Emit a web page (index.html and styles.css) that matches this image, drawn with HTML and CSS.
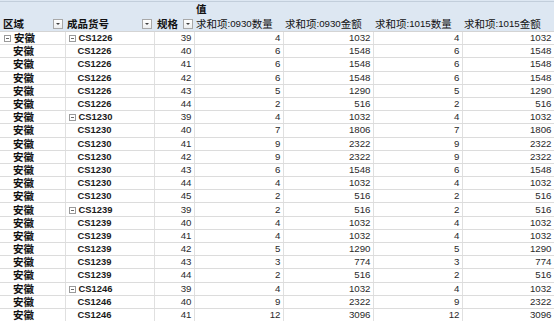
FILE: index.html
```html
<!DOCTYPE html>
<html lang="zh">
<head>
<meta charset="utf-8">
<title>数据透视表</title>
<link rel="stylesheet" href="styles.css">
</head>
<body>
<div class="band"></div>
<table class="pivot">
  <colgroup>
    <col class="c1"><col class="c2"><col class="c3"><col class="c4"><col class="c5"><col class="c6"><col class="c7">
  </colgroup>
  <thead>
    <tr class="h1">
      <th colspan="3"></th>
      <th colspan="4" class="val"><span class="zh b">值</span></th>
    </tr>
    <tr class="h2">
      <th class="lab l1"><div class="hcell"><span class="zh b">区域</span><span class="dd"></span></div></th>
      <th class="lab l2"><div class="hcell"><span class="zh b">成品货号</span><span class="dd"></span></div></th>
      <th class="lab l3"><div class="hcell"><span class="zh b">规格</span><span class="dd"></span></div></th>
      <th class="sum"><span class="zh">求和项</span>:0930<span class="zh">数量</span></th>
      <th class="sum"><span class="zh">求和项</span>:0930<span class="zh">金额</span></th>
      <th class="sum"><span class="zh">求和项</span>:1015<span class="zh">数量</span></th>
      <th class="sum"><span class="zh">求和项</span>:1015<span class="zh">金额</span></th>
    </tr>
  </thead>
  <tbody>
    <tr><td class="r1"><span class="tog"></span><span class="zh b">安徽</span></td><td class="r2"><span class="tog"></span><b>CS1226</b></td><td class="n">39</td><td class="n">4</td><td class="n">1032</td><td class="n">4</td><td class="n">1032</td></tr>
    <tr><td class="r1"><span class="slot"></span><span class="zh b">安徽</span></td><td class="r2"><span class="slot"></span><b>CS1226</b></td><td class="n">40</td><td class="n">6</td><td class="n">1548</td><td class="n">6</td><td class="n">1548</td></tr>
    <tr><td class="r1"><span class="slot"></span><span class="zh b">安徽</span></td><td class="r2"><span class="slot"></span><b>CS1226</b></td><td class="n">41</td><td class="n">6</td><td class="n">1548</td><td class="n">6</td><td class="n">1548</td></tr>
    <tr><td class="r1"><span class="slot"></span><span class="zh b">安徽</span></td><td class="r2"><span class="slot"></span><b>CS1226</b></td><td class="n">42</td><td class="n">6</td><td class="n">1548</td><td class="n">6</td><td class="n">1548</td></tr>
    <tr><td class="r1"><span class="slot"></span><span class="zh b">安徽</span></td><td class="r2"><span class="slot"></span><b>CS1226</b></td><td class="n">43</td><td class="n">5</td><td class="n">1290</td><td class="n">5</td><td class="n">1290</td></tr>
    <tr><td class="r1"><span class="slot"></span><span class="zh b">安徽</span></td><td class="r2"><span class="slot"></span><b>CS1226</b></td><td class="n">44</td><td class="n">2</td><td class="n">516</td><td class="n">2</td><td class="n">516</td></tr>

    <tr><td class="r1"><span class="slot"></span><span class="zh b">安徽</span></td><td class="r2"><span class="tog"></span><b>CS1230</b></td><td class="n">39</td><td class="n">4</td><td class="n">1032</td><td class="n">4</td><td class="n">1032</td></tr>
    <tr><td class="r1"><span class="slot"></span><span class="zh b">安徽</span></td><td class="r2"><span class="slot"></span><b>CS1230</b></td><td class="n">40</td><td class="n">7</td><td class="n">1806</td><td class="n">7</td><td class="n">1806</td></tr>
    <tr><td class="r1"><span class="slot"></span><span class="zh b">安徽</span></td><td class="r2"><span class="slot"></span><b>CS1230</b></td><td class="n">41</td><td class="n">9</td><td class="n">2322</td><td class="n">9</td><td class="n">2322</td></tr>
    <tr><td class="r1"><span class="slot"></span><span class="zh b">安徽</span></td><td class="r2"><span class="slot"></span><b>CS1230</b></td><td class="n">42</td><td class="n">9</td><td class="n">2322</td><td class="n">9</td><td class="n">2322</td></tr>
    <tr><td class="r1"><span class="slot"></span><span class="zh b">安徽</span></td><td class="r2"><span class="slot"></span><b>CS1230</b></td><td class="n">43</td><td class="n">6</td><td class="n">1548</td><td class="n">6</td><td class="n">1548</td></tr>
    <tr><td class="r1"><span class="slot"></span><span class="zh b">安徽</span></td><td class="r2"><span class="slot"></span><b>CS1230</b></td><td class="n">44</td><td class="n">4</td><td class="n">1032</td><td class="n">4</td><td class="n">1032</td></tr>
    <tr><td class="r1"><span class="slot"></span><span class="zh b">安徽</span></td><td class="r2"><span class="slot"></span><b>CS1230</b></td><td class="n">45</td><td class="n">2</td><td class="n">516</td><td class="n">2</td><td class="n">516</td></tr>

    <tr><td class="r1"><span class="slot"></span><span class="zh b">安徽</span></td><td class="r2"><span class="tog"></span><b>CS1239</b></td><td class="n">39</td><td class="n">2</td><td class="n">516</td><td class="n">2</td><td class="n">516</td></tr>
    <tr><td class="r1"><span class="slot"></span><span class="zh b">安徽</span></td><td class="r2"><span class="slot"></span><b>CS1239</b></td><td class="n">40</td><td class="n">4</td><td class="n">1032</td><td class="n">4</td><td class="n">1032</td></tr>
    <tr><td class="r1"><span class="slot"></span><span class="zh b">安徽</span></td><td class="r2"><span class="slot"></span><b>CS1239</b></td><td class="n">41</td><td class="n">4</td><td class="n">1032</td><td class="n">4</td><td class="n">1032</td></tr>
    <tr><td class="r1"><span class="slot"></span><span class="zh b">安徽</span></td><td class="r2"><span class="slot"></span><b>CS1239</b></td><td class="n">42</td><td class="n">5</td><td class="n">1290</td><td class="n">5</td><td class="n">1290</td></tr>
    <tr><td class="r1"><span class="slot"></span><span class="zh b">安徽</span></td><td class="r2"><span class="slot"></span><b>CS1239</b></td><td class="n">43</td><td class="n">3</td><td class="n">774</td><td class="n">3</td><td class="n">774</td></tr>
    <tr><td class="r1"><span class="slot"></span><span class="zh b">安徽</span></td><td class="r2"><span class="slot"></span><b>CS1239</b></td><td class="n">44</td><td class="n">2</td><td class="n">516</td><td class="n">2</td><td class="n">516</td></tr>

    <tr><td class="r1"><span class="slot"></span><span class="zh b">安徽</span></td><td class="r2"><span class="tog"></span><b>CS1246</b></td><td class="n">39</td><td class="n">4</td><td class="n">1032</td><td class="n">4</td><td class="n">1032</td></tr>
    <tr><td class="r1"><span class="slot"></span><span class="zh b">安徽</span></td><td class="r2"><span class="slot"></span><b>CS1246</b></td><td class="n">40</td><td class="n">9</td><td class="n">2322</td><td class="n">9</td><td class="n">2322</td></tr>
    <tr><td class="r1"><span class="slot"></span><span class="zh b">安徽</span></td><td class="r2"><span class="slot"></span><b>CS1246</b></td><td class="n">41</td><td class="n">12</td><td class="n">3096</td><td class="n">12</td><td class="n">3096</td></tr>
  </tbody>
</table>
</body>
</html>
```

FILE: styles.css
```css
html, body {
  margin: 0;
  padding: 0;
  background: #ffffff;
}
body {
  font-family: "Liberation Sans", Arial, sans-serif;
  font-size: 9.7px;
  line-height: 12px;
  color: #151515;
  overflow: hidden;
}
.zh {
  font-family: "Noto Sans CJK SC", "Noto Sans", sans-serif;
  font-size: 10.5px;
  display: inline-block;
  height: 12px;
  line-height: 12px;
  vertical-align: top;
}
.b { font-weight: 700; }
b { font-weight: 700; }

.band {
  height: 1px;
  background: #dde7f2;
}
.pivot {
  border-collapse: collapse;
  table-layout: fixed;
  width: 554px;
}
.c1 { width: 65px; }
.c2 { width: 89px; }
.c3 { width: 40px; }
.c4 { width: 89px; }
.c5 { width: 90px; }
.c6 { width: 89px; }
.c7 { width: 92px; }

thead th {
  background: #dde7f2;
  padding: 0;
  font-weight: normal;
  text-align: left;
  line-height: 12px;
  white-space: nowrap;
  color: #111;
}
.h1 th {
  border-top: 1px solid #c2cedb;
  height: 14px;
  vertical-align: top;
  padding-top: 1px;
}
.h1 .val { padding-left: 2px; }
.h2 th {
  height: 14px;
  border-bottom: 1px solid #d4d4d4;
  vertical-align: middle;
}
.hcell {
  display: flex;
  align-items: center;
  height: 12px;
}
.l1 .hcell { padding: 0 2px 0 3px; }
.l2 .hcell { padding: 0 2px 0 2px; }
.l3 .hcell { padding: 0 1px 0 3px; }
.h2 .sum { padding-left: 2px; }

.dd {
  margin-left: auto;
  width: 8px;
  height: 8px;
  border: 1px solid #a8a8a8;
  background: linear-gradient(#ffffff, #eceef0);
  display: flex;
  align-items: center;
  justify-content: center;
  flex: none;
}
.dd::after {
  content: "";
  width: 0;
  height: 0;
  border-left: 2px solid transparent;
  border-right: 2px solid transparent;
  border-top: 2px solid #404040;
}

tbody tr { height: 13.2px; }
tbody td {
  padding: 0;
  border-bottom: 1px solid #dcdcdc;
  border-right: 1px solid #e0e0e0;
  line-height: 12px;
  white-space: nowrap;
  overflow: hidden;
  color: #111;
  vertical-align: middle;
}
td.r1, td.r2 {
  text-align: left;
}
td.r1 { padding-left: 3px; }
td.r2 { padding-left: 2px; }
td.r2 b {
  font-size: 9.4px;
  color: #1a1a1a;
}
.slot {
  display: inline-block;
  width: 10px;
  height: 12px;
  vertical-align: top;
}
.tog {
  display: inline-block;
  width: 5px;
  height: 5px;
  margin: 3px 3px 0 1px;
  border: 1px solid #9a9a9a;
  position: relative;
  vertical-align: top;
}
.tog::after {
  content: "";
  position: absolute;
  left: 1px;
  right: 1px;
  top: 2px;
  height: 1px;
  background: #6a6a6a;
}
td.n {
  text-align: right;
  padding-right: 2px;
  color: #2a2a2a;
}
```
